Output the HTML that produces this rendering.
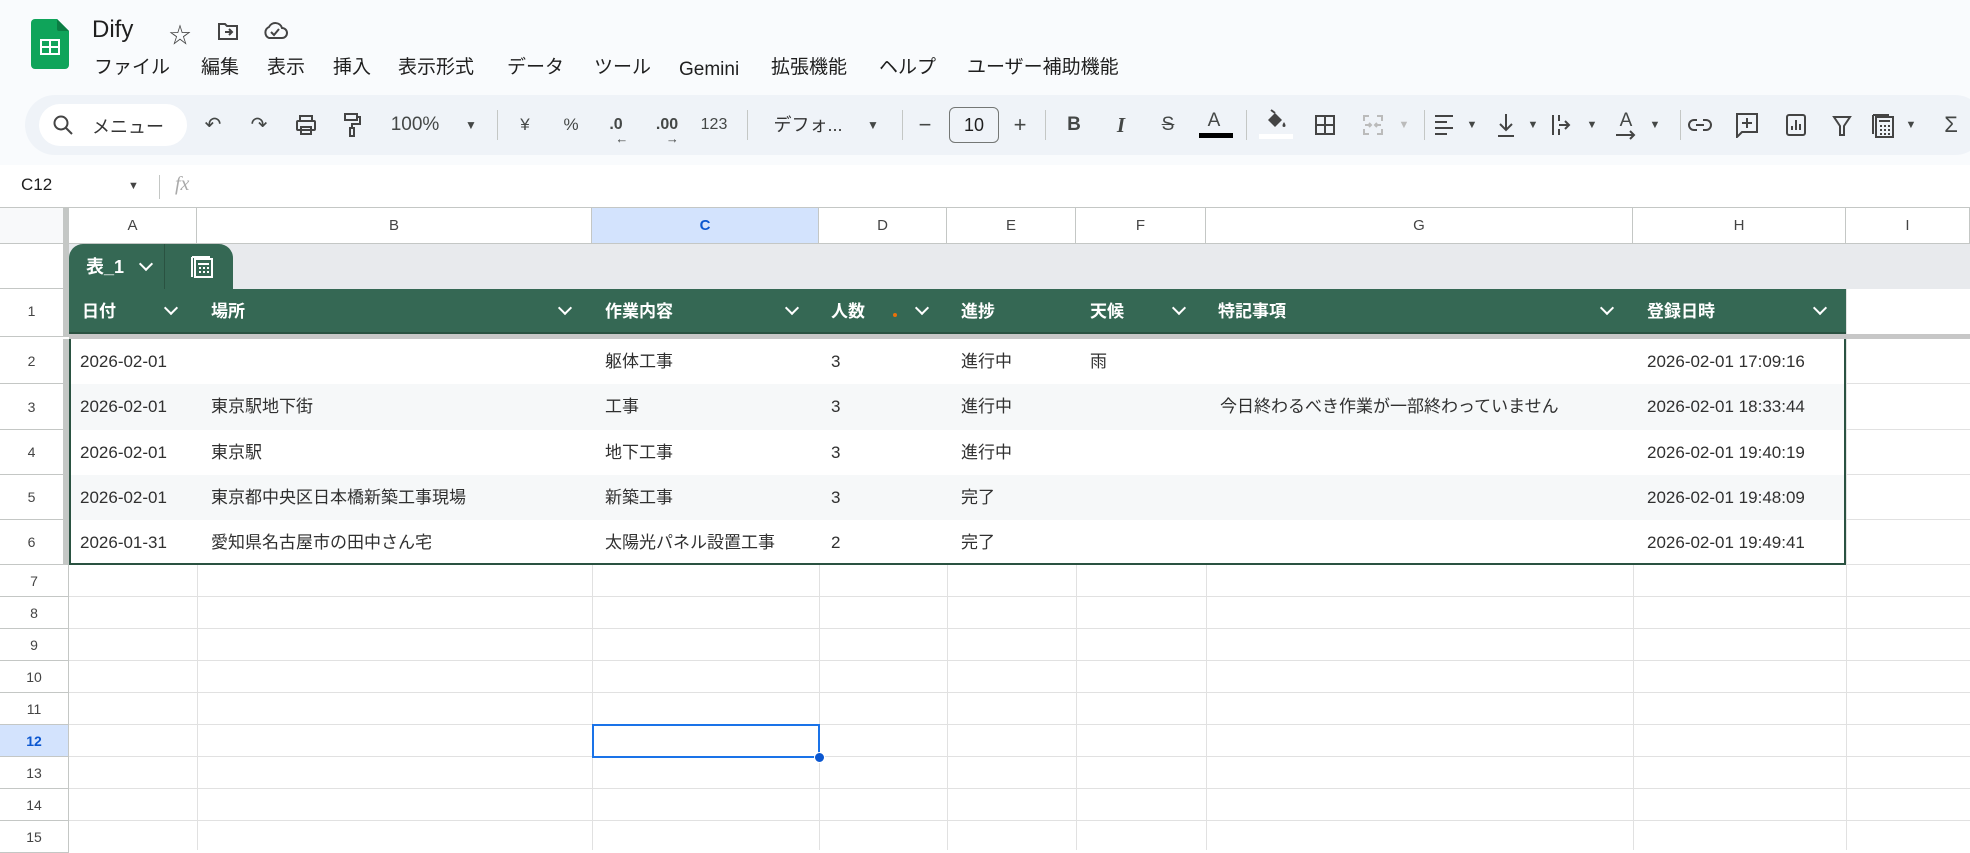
<!DOCTYPE html>
<html><head><meta charset="utf-8"><style>
*{margin:0;padding:0;box-sizing:border-box}
body{width:1970px;height:850px;overflow:hidden;background:#fff;font-family:"Liberation Sans","Noto Sans CJK JP",sans-serif;color:#1f1f1f;position:relative}
.a{position:absolute;white-space:nowrap}
.top{left:0;top:0;width:1970px;height:165px;background:#f9fbfd}
.menu span{position:absolute;top:56px;font-size:19px;line-height:24px;height:24px}
.tb{left:25px;top:95px;width:1960px;height:60px;background:#eff3f8;border-radius:30px}
.ti{position:absolute;top:125px;transform:translate(-50%,-50%);font-size:17px;color:#444746;line-height:22px}
.sep{position:absolute;top:110px;width:1px;height:30px;background:#c4c7c5}
.ch{top:208px;height:36px;border-right:1px solid #c4c7c5;border-bottom:1px solid #c4c7c5;background:#fff;font-size:15px;color:#444;text-align:center;line-height:35px}
.rh{left:0;width:69px;border-right:1px solid #c4c7c5;border-bottom:1px solid #c4c7c5;background:#fff;font-size:14px;color:#444;text-align:center}
.hd{position:absolute;top:289px;height:45px;line-height:45px;color:#fff;font-size:17px;font-weight:bold}
.cv{position:absolute;top:303px;width:10px;height:10px;border-right:2px solid #fff;border-bottom:2px solid #fff;transform:rotate(45deg)}
.c{position:absolute;font-size:17px;color:#303030;height:45px;line-height:45px;white-space:nowrap}
.vl{position:absolute;width:1px;background:#e1e1e1}
.hl{position:absolute;height:1px;background:#e1e1e1;left:69px;width:1901px}
</style></head><body>
<div class="a top"></div>
<svg class="a" style="left:31px;top:19px" width="38" height="50" viewBox="0 0 38 50"><path d="M4 0h22l12 12v34a4 4 0 0 1-4 4H4a4 4 0 0 1-4-4V4a4 4 0 0 1 4-4z" fill="#0fa45a"/><path d="M26 0l12 12H28a2 2 0 0 1-2-2z" fill="#0b7d43"/><rect x="9" y="20" width="20" height="16" fill="#fff"/><rect x="11" y="22" width="7" height="5" fill="#0fa45a"/><rect x="20" y="22" width="7" height="5" fill="#0fa45a"/><rect x="11" y="29" width="7" height="5" fill="#0fa45a"/><rect x="20" y="29" width="7" height="5" fill="#0fa45a"/></svg>
<div class="a" style="left:92px;top:16px;font-size:24px">Dify</div>
<div class="a" style="left:169px;top:18px;font-size:22px;color:#444">☆</div>
<svg class="a" style="left:217px;top:21px" width="22" height="20" viewBox="0 0 22 20" fill="none" stroke="#444" stroke-width="2"><path d="M2 3h6l2 2h10v13H2z"/><path d="M8 11h7M12 8l3 3-3 3"/></svg>
<svg class="a" style="left:262px;top:20px" width="26" height="20" viewBox="0 0 26 20" fill="none" stroke="#444" stroke-width="2"><path d="M7 18h13a5 5 0 0 0 0-10 7 7 0 0 0-13-1 6 6 0 0 0 0 11z"/><path d="M9 12l3 3 5-6"/></svg>
<div class="menu"><span style="left:94px">ファイル</span><span style="left:201px">編集</span><span style="left:267px">表示</span><span style="left:333px">挿入</span><span style="left:398px">表示形式</span><span style="left:507px">データ</span><span style="left:594px">ツール</span><span style="left:679px;top:58px">Gemini</span><span style="left:771px">拡張機能</span><span style="left:879px">ヘルプ</span><span style="left:967px">ユーザー補助機能</span></div>
<div class="a tb"></div>
<div class="a" style="left:39px;top:104px;width:148px;height:42px;background:#fff;border-radius:21px"></div>
<svg class="a" style="left:52px;top:114px" width="22" height="22" viewBox="0 0 22 22" fill="none" stroke="#444" stroke-width="2"><circle cx="9" cy="9" r="6.5"/><path d="M14 14l6 6"/></svg>
<div class="a" style="left:92px;top:113px;font-size:18px;color:#333">メニュー</div>
<div class="ti" style="left:213px;font-size:20px">↶</div>
<div class="ti" style="left:259px;font-size:20px">↷</div>
<svg class="a" style="left:295px;top:114px" width="22" height="22" viewBox="0 0 22 22" fill="none" stroke="#444" stroke-width="2"><rect x="5" y="2" width="12" height="5"/><rect x="2" y="7" width="18" height="9" rx="1"/><rect x="6" y="13" width="10" height="7"/></svg>
<svg class="a" style="left:343px;top:112px" width="18" height="26" viewBox="0 0 18 26" fill="none" stroke="#444" stroke-width="2"><rect x="2" y="2" width="12" height="6"/><path d="M14 5h3v7H9v4"/><rect x="7" y="16" width="4" height="8"/></svg>
<div class="ti" style="left:415px;font-size:19px">100%</div>
<div class="ti" style="left:471px;font-size:12px">▼</div>
<div class="sep" style="left:497px"></div>
<div class="ti" style="left:525px">¥</div>
<div class="ti" style="left:571px">%</div>
<div class="ti" style="left:616px;font-size:16px;font-weight:bold">.0<span style="position:absolute;left:6px;top:14px;font-size:13px">←</span></div>
<div class="ti" style="left:667px;font-size:16px;font-weight:bold">.00<span style="position:absolute;left:10px;top:14px;font-size:13px">→</span></div>
<div class="ti" style="left:714px;font-size:16px">123</div>
<div class="sep" style="left:747px"></div>
<div class="ti" style="left:808px;font-size:18px;color:#333">デフォ...</div>
<div class="ti" style="left:873px;font-size:12px">▼</div>
<div class="sep" style="left:902px"></div>
<div class="ti" style="left:925px;font-size:22px">−</div>
<div class="a" style="left:949px;top:107px;width:50px;height:36px;border:1px solid #747775;border-radius:6px;text-align:center;line-height:34px;font-size:18px">10</div>
<div class="ti" style="left:1020px;font-size:22px">+</div>
<div class="sep" style="left:1045px"></div>
<div class="ti" style="left:1074px;font-weight:bold;font-size:19px">B</div>
<div class="ti" style="left:1121px;font-style:italic;font-weight:bold;font-family:'Liberation Serif',serif;font-size:21px">I</div>
<div class="ti" style="left:1168px;text-decoration:line-through;font-size:19px">S</div>
<div class="ti" style="left:1214px;font-size:19px;top:121px">A</div>
<div class="a" style="left:1199px;top:133px;width:34px;height:5px;background:#000"></div>
<div class="sep" style="left:1246px"></div>
<svg class="a" style="left:1264px;top:108px" width="24" height="24" viewBox="0 0 24 24" fill="#444"><path d="M4 12l7-7 7 7-7 7z"/><path d="M7 2l4 3" stroke="#444" stroke-width="2"/><path d="M20 14c-2 3-2 5 0 5s2-2 0-5z"/></svg>
<div class="a" style="left:1259px;top:134px;width:34px;height:5px;background:#fff"></div>
<svg class="a" style="left:1314px;top:114px" width="22" height="22" viewBox="0 0 22 22" fill="none" stroke="#444" stroke-width="2"><rect x="2" y="2" width="18" height="18"/><path d="M11 2v18M2 11h18"/></svg>
<svg class="a" style="left:1362px;top:114px" width="22" height="22" viewBox="0 0 22 22" fill="none" stroke="#bbb" stroke-width="2"><path d="M2 7V2h5M2 15v5h5M20 7V2h-5M20 15v5h-5M3 11h6M19 11h-6M7 9l2 2-2 2M15 9l-2 2 2 2"/></svg>
<div class="ti" style="left:1404px;font-size:11px;color:#bbb">▼</div>
<div class="sep" style="left:1424px"></div>
<svg class="a" style="left:1434px;top:114px" width="20" height="22" viewBox="0 0 20 22" stroke="#444" stroke-width="2"><path d="M1 2h18M1 8h12M1 14h18M1 20h12"/></svg>
<div class="ti" style="left:1472px;font-size:11px">▼</div>
<svg class="a" style="left:1496px;top:112px" width="20" height="26" viewBox="0 0 20 26" fill="none" stroke="#444" stroke-width="2"><path d="M10 2v16M4 12l6 6 6-6M2 24h16"/></svg>
<div class="ti" style="left:1533px;font-size:11px">▼</div>
<svg class="a" style="left:1551px;top:113px" width="22" height="24" viewBox="0 0 22 24" fill="none" stroke="#444" stroke-width="2"><path d="M2 2v20M8 2v6M8 16v6M8 12h10M14 8l4 4-4 4"/></svg>
<div class="ti" style="left:1592px;font-size:11px">▼</div>
<div class="ti" style="left:1626px;font-size:19px;top:121px">A</div>
<svg class="a" style="left:1614px;top:130px" width="24" height="10" viewBox="0 0 24 10" fill="none" stroke="#444" stroke-width="2"><path d="M2 5h18M16 1l4 4-4 4"/></svg>
<div class="ti" style="left:1655px;font-size:11px">▼</div>
<div class="sep" style="left:1680px"></div>
<svg class="a" style="left:1688px;top:117px" width="24" height="16" viewBox="0 0 24 16" fill="none" stroke="#444" stroke-width="2"><path d="M9 3H6a5 5 0 0 0 0 10h3M15 3h3a5 5 0 0 1 0 10h-3M8 8h8"/></svg>
<svg class="a" style="left:1735px;top:112px" width="24" height="26" viewBox="0 0 24 26" fill="none" stroke="#444" stroke-width="2"><path d="M2 2h20v18H7l-5 5z"/><path d="M12 6v10M7 11h10"/></svg>
<svg class="a" style="left:1785px;top:113px" width="22" height="24" viewBox="0 0 22 24" fill="none" stroke="#444" stroke-width="2"><rect x="2" y="2" width="18" height="20" rx="2"/><path d="M7 17v-4M11 17V7M15 17v-6"/></svg>
<svg class="a" style="left:1832px;top:115px" width="20" height="22" viewBox="0 0 20 22" fill="none" stroke="#444" stroke-width="2"><path d="M2 2h16l-6 9v9h-4v-9z"/></svg>
<svg class="a" style="left:1871px;top:111px" width="24" height="28" viewBox="0 0 24 28" fill="none" stroke="#444" stroke-width="2"><rect x="5" y="6" width="17" height="20"/><path d="M2 4v19M2 4h16M8 10h11M9 15h2M13 15h2M17 15h2M9 19h2M13 19h2M17 19h2M9 23h2M13 23h2M17 23h2"/></svg>
<div class="ti" style="left:1911px;font-size:11px">▼</div>
<div class="ti" style="left:1951px;font-size:22px">Σ</div>
<div class="a" style="left:21px;top:175px;font-size:17px">C12</div>
<div class="a" style="left:128px;top:180px;font-size:11px;color:#444">▼</div>
<div class="a" style="left:159px;top:175px;width:1px;height:24px;background:#c4c7c5"></div>
<div class="a" style="left:175px;top:173px;font-size:20px;font-style:italic;color:#aaa;font-family:'Liberation Serif',serif">fx</div>
<div class="a" style="left:0;top:207px;width:1970px;height:1px;background:#c4c7c5"></div>
<div class="a ch" style="left:0;width:69px;background:#f8f9fa;border-right:6px solid #c4c7c5"></div>
<div class="a ch" style="left:69px;width:128px">A</div>
<div class="a ch" style="left:197px;width:395px">B</div>
<div class="a ch" style="left:592px;width:227px;background:#d3e3fd;color:#0b57d0;font-weight:bold">C</div>
<div class="a ch" style="left:819px;width:128px">D</div>
<div class="a ch" style="left:947px;width:129px">E</div>
<div class="a ch" style="left:1076px;width:130px">F</div>
<div class="a ch" style="left:1206px;width:427px">G</div>
<div class="a ch" style="left:1633px;width:213px">H</div>
<div class="a ch" style="left:1846px;width:124px">I</div>
<div class="a rh" style="top:244px;height:45px;border-right:6px solid #c4c7c5;width:69px"></div>
<div class="a rh" style="top:289px;height:48px;line-height:45px;border-right:6px solid #c4c7c5">1</div>
<div class="a rh" style="top:339px;height:45px;line-height:45px;border-right:6px solid #c4c7c5">2</div>
<div class="a rh" style="top:384px;height:46px;line-height:46px;border-right:6px solid #c4c7c5">3</div>
<div class="a rh" style="top:430px;height:45px;line-height:45px;border-right:6px solid #c4c7c5">4</div>
<div class="a rh" style="top:475px;height:45px;line-height:45px;border-right:6px solid #c4c7c5">5</div>
<div class="a rh" style="top:520px;height:45px;line-height:45px;border-right:6px solid #c4c7c5">6</div>
<div class="a rh" style="top:565px;height:32px;line-height:32px">7</div>
<div class="a rh" style="top:597px;height:32px;line-height:32px">8</div>
<div class="a rh" style="top:629px;height:32px;line-height:32px">9</div>
<div class="a rh" style="top:661px;height:32px;line-height:32px">10</div>
<div class="a rh" style="top:693px;height:32px;line-height:32px">11</div>
<div class="a rh" style="top:725px;height:32px;line-height:32px;background:#d3e3fd;color:#0b57d0;font-weight:bold">12</div>
<div class="a rh" style="top:757px;height:32px;line-height:32px">13</div>
<div class="a rh" style="top:789px;height:32px;line-height:32px">14</div>
<div class="a rh" style="top:821px;height:32px;line-height:32px">15</div>
<div class="vl" style="left:197px;top:565px;height:285px"></div>
<div class="vl" style="left:592px;top:565px;height:285px"></div>
<div class="vl" style="left:819px;top:565px;height:285px"></div>
<div class="vl" style="left:947px;top:565px;height:285px"></div>
<div class="vl" style="left:1076px;top:565px;height:285px"></div>
<div class="vl" style="left:1206px;top:565px;height:285px"></div>
<div class="vl" style="left:1633px;top:565px;height:285px"></div>
<div class="vl" style="left:1846px;top:244px;height:606px"></div>
<div class="hl" style="top:596px"></div><div class="hl" style="top:628px"></div><div class="hl" style="top:660px"></div><div class="hl" style="top:692px"></div><div class="hl" style="top:724px"></div><div class="hl" style="top:756px"></div><div class="hl" style="top:788px"></div><div class="hl" style="top:820px"></div>
<div class="hl" style="top:383px;left:1846px;width:124px"></div><div class="hl" style="top:429px;left:1846px;width:124px"></div><div class="hl" style="top:474px;left:1846px;width:124px"></div><div class="hl" style="top:519px;left:1846px;width:124px"></div><div class="hl" style="top:564px;left:1846px;width:124px"></div>
<div class="a" style="left:69px;top:244px;width:1901px;height:45px;background:#e8eaed"></div>
<div class="a" style="left:69px;top:244px;width:164px;height:45px;background:#356854;border-radius:14px 14px 0 0"></div>
<div class="a" style="left:164px;top:244px;width:1px;height:45px;background:#2a5241"></div>
<div class="a" style="left:86px;top:255px;color:#fff;font-size:18px;font-weight:bold;line-height:24px">表_1</div>
<div class="cv" style="left:141px;top:259px"></div>
<svg class="a" style="left:190px;top:255px" width="24" height="24" viewBox="0 0 24 24" fill="none" stroke="#fff" stroke-width="2"><rect x="5" y="4" width="17" height="18"/><path d="M2 2v20M2 2h18M8 9h11M9 13h2M13 13h2M17 13h2M9 17h2M13 17h2M17 17h2"/></svg>
<div class="a" style="left:69px;top:289px;width:1777px;height:45px;background:#356854;border-bottom:2px solid #2a5241"></div>
<div class="a" style="left:69px;top:334px;width:1901px;height:5px;background:#c7c7c7"></div>
<div class="hd" style="left:82px">日付</div><div class="cv" style="left:166px"></div>
<div class="hd" style="left:211px">場所</div><div class="cv" style="left:560px"></div>
<div class="hd" style="left:605px">作業内容</div><div class="cv" style="left:787px"></div>
<div class="hd" style="left:831px">人数</div><div class="a" style="left:893px;top:313px;width:4px;height:4px;background:#e8710a;border-radius:2px"></div><div class="cv" style="left:917px"></div>
<div class="hd" style="left:961px">進捗</div>
<div class="hd" style="left:1090px">天候</div><div class="cv" style="left:1174px"></div>
<div class="hd" style="left:1218px">特記事項</div><div class="cv" style="left:1602px"></div>
<div class="hd" style="left:1647px">登録日時</div><div class="cv" style="left:1815px"></div>
<div class="a" style="left:69px;top:339px;width:1777px;height:226px;background:#fff;border-left:2px solid #2a5241;border-right:2px solid #2a5241;border-bottom:2px solid #2a5241"></div>
<div class="a" style="left:71px;top:384px;width:1773px;height:46px;background:#f6f8f9"></div>
<div class="a" style="left:71px;top:475px;width:1773px;height:45px;background:#f6f8f9"></div>
<div class="c" style="left:80px;top:339px">2026-02-01</div><div class="c" style="left:605px;top:339px">躯体工事</div><div class="c" style="left:831px;top:339px">3</div><div class="c" style="left:961px;top:339px">進行中</div><div class="c" style="left:1090px;top:339px">雨</div><div class="c" style="left:1647px;top:339px">2026-02-01 17:09:16</div>
<div class="c" style="left:80px;top:384px">2026-02-01</div><div class="c" style="left:211px;top:384px">東京駅地下街</div><div class="c" style="left:605px;top:384px">工事</div><div class="c" style="left:831px;top:384px">3</div><div class="c" style="left:961px;top:384px">進行中</div><div class="c" style="left:1220px;top:384px">今日終わるべき作業が一部終わっていません</div><div class="c" style="left:1647px;top:384px">2026-02-01 18:33:44</div>
<div class="c" style="left:80px;top:430px">2026-02-01</div><div class="c" style="left:211px;top:430px">東京駅</div><div class="c" style="left:605px;top:430px">地下工事</div><div class="c" style="left:831px;top:430px">3</div><div class="c" style="left:961px;top:430px">進行中</div><div class="c" style="left:1647px;top:430px">2026-02-01 19:40:19</div>
<div class="c" style="left:80px;top:475px">2026-02-01</div><div class="c" style="left:211px;top:475px">東京都中央区日本橋新築工事現場</div><div class="c" style="left:605px;top:475px">新築工事</div><div class="c" style="left:831px;top:475px">3</div><div class="c" style="left:961px;top:475px">完了</div><div class="c" style="left:1647px;top:475px">2026-02-01 19:48:09</div>
<div class="c" style="left:80px;top:520px">2026-01-31</div><div class="c" style="left:211px;top:520px">愛知県名古屋市の田中さん宅</div><div class="c" style="left:605px;top:520px">太陽光パネル設置工事</div><div class="c" style="left:831px;top:520px">2</div><div class="c" style="left:961px;top:520px">完了</div><div class="c" style="left:1647px;top:520px">2026-02-01 19:49:41</div>
<div class="a" style="left:592px;top:724px;width:228px;height:34px;border:2px solid #1a73e8"></div>
<div class="a" style="left:814px;top:752px;width:11px;height:11px;border-radius:50%;background:#0b57d0;border:1px solid #fff"></div>
</body></html>
